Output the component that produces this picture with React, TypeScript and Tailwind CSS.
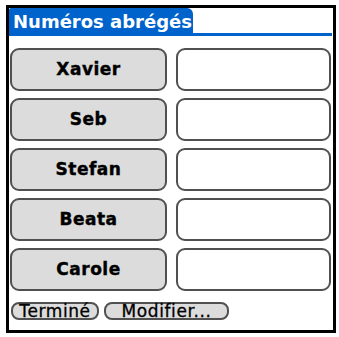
// @ts-nocheck
const names = ['Xavier', 'Seb', 'Stefan', 'Beata', 'Carole']

export default function App() {
    return (
        <div className="w-[339px] h-[337px] bg-white pl-[6px] pt-[5px]" style={{ fontFamily: '"DejaVu Sans", sans-serif' }}>
            <div className="w-[330px] h-[328px] border-[3px] border-black flex flex-col">
                {/* Title tab */}
                <div className="flex flex-col">
                    <div className="w-[184px] h-[25px] bg-[#0063cc] rounded-tr-[6px] rounded-tl-[2px] pl-[4px] flex items-center">
                        <span className="text-white font-bold text-[18px] leading-none pt-[2px]">Numéros abrégés</span>
                    </div>
                    <div className="h-[3px] bg-[#0063cc] mr-[1px]" />
                </div>

                {/* Speed dial rows */}
                <div className="mt-[12px] flex flex-col gap-[7px] pl-[1px]">
                    {names.map((n) => (
                        <div key={n} className="flex gap-[9px] h-[43px]">
                            <div className="w-[157px] h-full bg-[#dcdcdc] border-2 border-[#505050] rounded-[9px] text-black font-bold text-[17px] tracking-[0.5px] leading-none flex items-center justify-center [-webkit-text-stroke:0.4px_black]">
                                {n}
                            </div>
                            <div className="w-[155px] h-full bg-white border-2 border-[#505050] rounded-[9px]" />
                        </div>
                    ))}
                </div>

                {/* Bottom buttons */}
                <div className="mt-[11px] flex gap-[5px] pl-[2px]">
                    <div className="w-[88px] h-[18px] bg-[#dcdcdc] border-2 border-[#505050] rounded-[8px] text-black text-[17px] tracking-[0.6px] leading-[14px] text-center [-webkit-text-stroke:0.3px_black]">
                        Terminé
                    </div>
                    <div className="w-[125px] h-[18px] bg-[#dcdcdc] border-2 border-[#505050] rounded-[8px] text-black text-[17px] tracking-[0.6px] leading-[14px] text-center [-webkit-text-stroke:0.3px_black]">
                        Modifier...
                    </div>
                </div>
            </div>
        </div>
    )
}
